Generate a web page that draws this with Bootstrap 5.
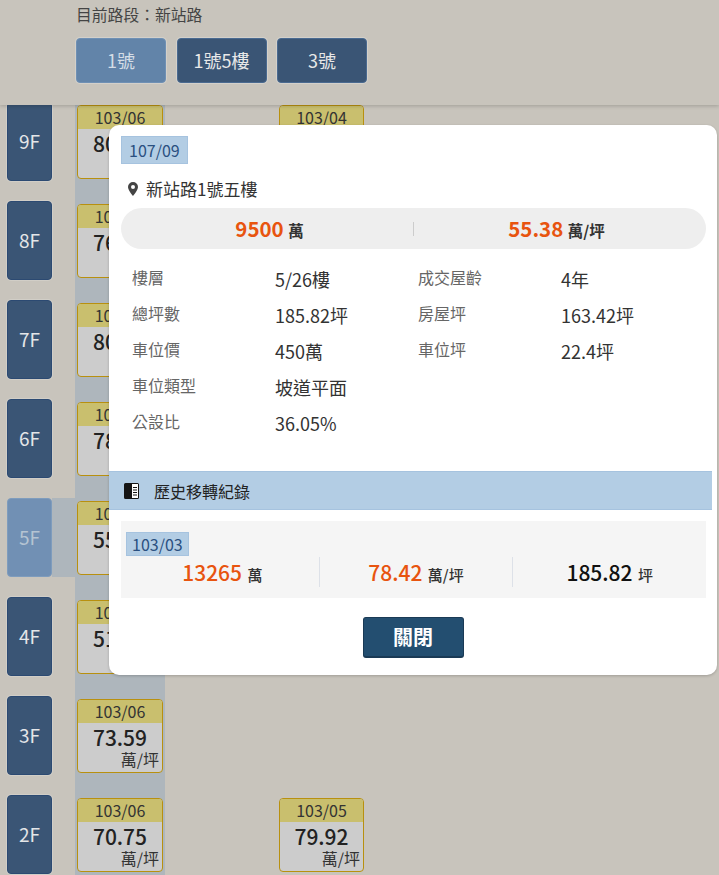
<!DOCTYPE html>
<html lang="zh-Hant">
<head>
<meta charset="utf-8">
<title>新站路</title>
<link href="https://cdn.jsdelivr.net/npm/bootstrap@5.3.0/dist/css/bootstrap.min.css" rel="stylesheet">
<style>
html,body{height:875px;overflow:hidden}
body{background:#c8c4bc;font-family:"Noto Sans CJK TC","Noto Sans",sans-serif;color:#222;position:relative}
.top-bar{height:105px;padding:4px 0 0 76px;box-shadow:0 1px 4px rgba(0,0,0,.2);position:relative;z-index:2;background:#c8c4bc}
.top-title{font-size:15.8px;line-height:22px;color:#444;margin-bottom:12px}
.road-btn{width:90px;height:45px;background:#3a5575;color:#e8e8e8;border:1px solid #4a6a90;border-radius:4px;font-size:18px;line-height:43px;text-align:center;padding:0;box-shadow:0 0 0 1px rgba(225,225,220,.45)}
.road-btn.on{background:#6284a9;border-color:#6f90b4;color:#d4dde6}
.road-gap{gap:10.5px}
.floors{height:770px;overflow:hidden;position:relative}
.floors-inner{margin-top:-3px}
.col-hi{position:absolute;left:75px;top:0;width:90px;height:770px;background:#aeb6bc}
.floor-row{height:79px;margin-bottom:20px;position:relative;padding-left:7px}
.floor-row.cur{background:linear-gradient(#aeb6bc,#aeb6bc) no-repeat 52px 0/113px 100%}
.floor-tag{width:45px;height:79px;background:#3a5575;border:1px solid #2c4a72;border-radius:4px;color:#e4e6e8;font-size:19px;display:flex;align-items:center;justify-content:center;flex:none;box-shadow:0 0 0 1px rgba(225,225,220,.35)}
.floor-tag.cur{background:#7190b4;border-color:#7e9cbd;color:#b5c4d2;box-shadow:none}
.deal{position:absolute;top:3px;width:86px;height:74px;border:1px solid #b8900f;border-radius:4px;background:#ccc;overflow:hidden;text-align:center}
.deal.c1{left:77px}
.deal.c2{left:279px;width:85px}
.deal-date{height:23px;background:#c9bf6e;font-size:16px;line-height:23px;color:#333}
.deal-price{font-size:21px;font-weight:500;line-height:28px;color:#222}
.deal-unit{font-size:16px;line-height:20px;text-align:right;padding-right:3px;color:#333;margin-top:-2px}
.sheet{position:absolute;left:109px;top:125px;width:608px;height:550px;background:#fff;border-radius:10px;z-index:5;box-shadow:0 1px 3px rgba(0,0,0,.2);padding-top:11px}
.date-chip{display:inline-block;background:#b3cde4;border:1px solid #a6c3df;color:#2a5080;font-size:16px;line-height:26px;padding:0 7px}
.sheet-head{padding-left:12px;height:28px}
.addr{font-size:17px;line-height:24px;color:#333;padding:13px 0 0 19px;gap:8px}
.pill{margin:7px 11px 0 12px;height:41px;background:#eee;border-radius:21px}
.pill-cell{flex:1;text-align:center;font-size:15.5px;font-weight:700;color:#333;line-height:41px;padding-left:5px}
.pill-cell + .pill-cell{background:linear-gradient(#ccc,#ccc) no-repeat 0 50%/1px 14px;padding:0 6px 0 0}
.pill .num-or{font-size:20.5px;margin-right:1px}
.num-or{color:#e8540f;font-size:21px;font-weight:700;margin-right:2px}
.facts{padding:12px 0 0 23px;display:grid;grid-template-columns:143px 143px 143px 143px;grid-auto-rows:36px;height:222px;font-size:18px;line-height:36px;color:#333}
.fact-l{font-size:16px;color:#666;line-height:32px}
.band{height:39px;width:603px;background:#b3cde4;border-top:1px solid #a6c3df;border-bottom:1px solid #a6c3df;font-size:16px;color:#222;padding-left:15px;gap:15px}
.hist{margin:11px 11px 0 12px;height:77px;background:#f5f5f5;padding:11px 0 0 5px}
.hist .date-chip{line-height:22px;padding:0 5px;display:block;width:63px;height:24px}
.hist-row{height:30px;margin-top:1px}
.hist-cell{flex:1;text-align:center;font-size:15px;font-weight:500;color:#333;line-height:30px}
.hist-cell + .hist-cell{border-left:1px solid #dde1e8}
.num-blk{color:#111;font-size:21px;font-weight:500;margin-right:2px}
.hist .num-or{font-weight:500}
.close-wrap{padding-top:19px;text-align:center}
.close-btn{width:101px;height:41px;background:#234e70;color:#fff;font-size:20px;font-weight:700;border:1px solid #1a3a55;border-bottom-width:2px;border-radius:3px;padding:0;line-height:38px}
.close-btn:hover{background:#234e70;color:#fff}
</style>
</head>
<body>
<header class="top-bar">
  <div class="top-title">目前路段：新站路</div>
  <div class="d-flex road-gap">
    <button type="button" class="btn road-btn on">1號</button>
    <button type="button" class="btn road-btn">1號5樓</button>
    <button type="button" class="btn road-btn">3號</button>
  </div>
</header>
<main class="floors">
  <div class="col-hi"></div>
  <div class="floors-inner">
    <div class="floor-row"><div class="floor-tag">9F</div>
      <div class="deal c1"><div class="deal-date">103/06</div><div class="deal-price">80.12</div><div class="deal-unit">萬/坪</div></div>
      <div class="deal c2"><div class="deal-date">103/04</div><div class="deal-price">80.45</div><div class="deal-unit">萬/坪</div></div>
    </div>
    <div class="floor-row"><div class="floor-tag">8F</div>
      <div class="deal c1"><div class="deal-date">103/06</div><div class="deal-price">76.30</div><div class="deal-unit">萬/坪</div></div>
    </div>
    <div class="floor-row"><div class="floor-tag">7F</div>
      <div class="deal c1"><div class="deal-date">103/06</div><div class="deal-price">80.21</div><div class="deal-unit">萬/坪</div></div>
    </div>
    <div class="floor-row"><div class="floor-tag">6F</div>
      <div class="deal c1"><div class="deal-date">103/06</div><div class="deal-price">78.40</div><div class="deal-unit">萬/坪</div></div>
    </div>
    <div class="floor-row cur"><div class="floor-tag cur">5F</div>
      <div class="deal c1"><div class="deal-date">103/06</div><div class="deal-price">55.38</div><div class="deal-unit">萬/坪</div></div>
    </div>
    <div class="floor-row"><div class="floor-tag">4F</div>
      <div class="deal c1"><div class="deal-date">103/06</div><div class="deal-price">51.20</div><div class="deal-unit">萬/坪</div></div>
    </div>
    <div class="floor-row"><div class="floor-tag">3F</div>
      <div class="deal c1"><div class="deal-date">103/06</div><div class="deal-price">73.59</div><div class="deal-unit">萬/坪</div></div>
    </div>
    <div class="floor-row"><div class="floor-tag">2F</div>
      <div class="deal c1"><div class="deal-date">103/06</div><div class="deal-price">70.75</div><div class="deal-unit">萬/坪</div></div>
      <div class="deal c2"><div class="deal-date">103/05</div><div class="deal-price">79.92</div><div class="deal-unit">萬/坪</div></div>
    </div>
  </div>
</main>
<section class="sheet">
  <div class="sheet-head"><span class="date-chip">107/09</span></div>
  <div class="addr d-flex align-items-center">
    <svg width="10" height="14" viewBox="0 0 10 14"><path fill="#444" fill-rule="evenodd" d="M5 0a5 5 0 0 0-5 5c0 3.400 5 9 5 9s5-5.600 5-9a5 5 0 0 0-5-5zm0 3a2 2 0 1 1 0 4 2 2 0 0 1 0-4z"/></svg>
    <span>新站路1號五樓</span>
  </div>
  <div class="pill d-flex">
    <div class="pill-cell"><span class="num-or">9500</span> 萬</div>
    <div class="pill-cell"><span class="num-or">55.38</span> 萬/坪</div>
  </div>
  <div class="facts">
    <div class="fact-l">樓層</div><div>5/26樓</div><div class="fact-l">成交屋齡</div><div>4年</div>
    <div class="fact-l">總坪數</div><div>185.82坪</div><div class="fact-l">房屋坪</div><div>163.42坪</div>
    <div class="fact-l">車位價</div><div>450萬</div><div class="fact-l">車位坪</div><div>22.4坪</div>
    <div class="fact-l">車位類型</div><div>坡道平面</div><div></div><div></div>
    <div class="fact-l">公設比</div><div>36.05%</div><div></div><div></div>
  </div>
  <div class="band d-flex align-items-center">
    <svg width="15" height="16" viewBox="0 0 15 16"><path fill="#151515" d="M1.500 0H13.500A1.500 1.500 0 0 1 15 1.500V14.500A1.500 1.500 0 0 1 13.500 16H1.500A1.500 1.500 0 0 1 0 14.500V1.500A1.500 1.500 0 0 1 1.500 0Z"/><path fill="#fff" d="M8 1h6v14H8z"/><path fill="#151515" d="M9 4h4v1H9zM9 6.500h4v1H9zM9 9h4v1H9zM9 11.500h4v1H9z"/></svg>
    <span>歷史移轉紀錄</span>
  </div>
  <div class="hist">
    <span class="date-chip">103/03</span>
    <div class="hist-row d-flex">
      <div class="hist-cell"><span class="num-or">13265</span> 萬</div>
      <div class="hist-cell"><span class="num-or">78.42</span> 萬/坪</div>
      <div class="hist-cell"><span class="num-blk">185.82</span> 坪</div>
    </div>
  </div>
  <div class="close-wrap"><button type="button" class="btn close-btn">關閉</button></div>
</section>
<script src="https://cdn.jsdelivr.net/npm/bootstrap@5.3.0/dist/js/bootstrap.bundle.min.js"></script>
</body>
</html>
